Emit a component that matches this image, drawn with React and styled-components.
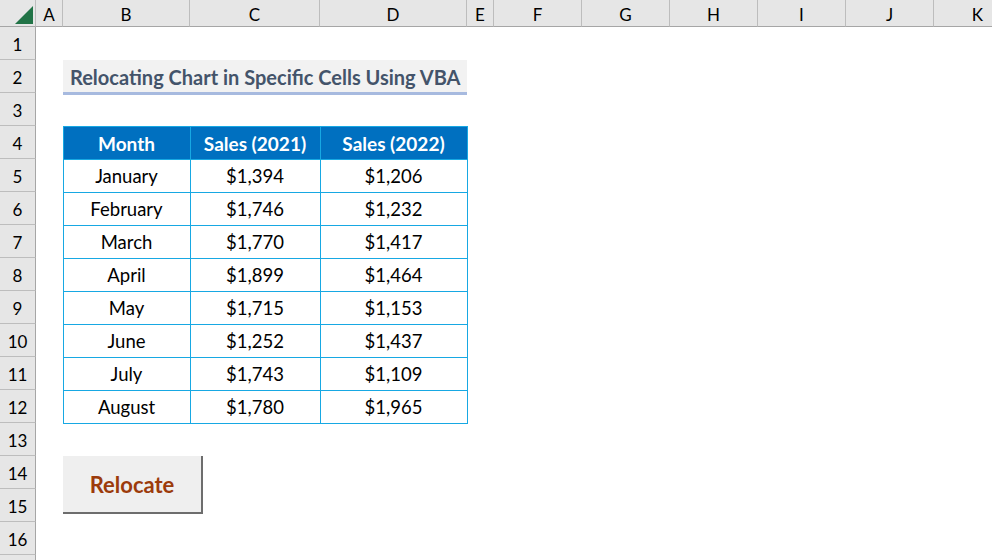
import React from 'react';
import styled, { createGlobalStyle } from 'styled-components';

const columns = [
  { name: 'A', width: 27 },
  { name: 'B', width: 127 },
  { name: 'C', width: 130 },
  { name: 'D', width: 147 },
  { name: 'E', width: 27 },
  { name: 'F', width: 88 },
  { name: 'G', width: 88 },
  { name: 'H', width: 88 },
  { name: 'I', width: 88 },
  { name: 'J', width: 88 },
  { name: 'K', width: 88 },
];

// row 17 only peeks in at the bottom edge, so its number is not drawn
const rows = Array.from({ length: 17 }, (_, i) => i + 1);
const visibleRows = 16;

const sales = [
  ['January', '$1,394', '$1,206'],
  ['February', '$1,746', '$1,232'],
  ['March', '$1,770', '$1,417'],
  ['April', '$1,899', '$1,464'],
  ['May', '$1,715', '$1,153'],
  ['June', '$1,252', '$1,437'],
  ['July', '$1,743', '$1,109'],
  ['August', '$1,780', '$1,965'],
];

const App = () => {
  return (
    <>
      <GlobalStyle />
      <Sheet>
        <Corner>
          <svg width="36" height="27" viewBox="0 0 36 27">
            <polygon points="33,6 33,24 15,24" fill="#217346" />
          </svg>
        </Corner>
        {columns.map((c, i) => (
          <ColHeader key={c.name} $col={i + 2}>{c.name}</ColHeader>
        ))}
        {rows.map((r) => (
          <RowHeader key={r} $row={r + 1}>{r <= visibleRows ? r : ''}</RowHeader>
        ))}

        <Title>Relocating Chart in Specific Cells Using VBA</Title>

        <DataTable>
          <thead>
            <tr>
              <th>Month</th>
              <th>Sales (2021)</th>
              <th>Sales (2022)</th>
            </tr>
          </thead>
          <tbody>
            {sales.map((row) => (
              <tr key={row[0]}>
                {row.map((v, i) => <td key={i}>{v}</td>)}
              </tr>
            ))}
          </tbody>
        </DataTable>

        <RelocateButton>Relocate</RelocateButton>
      </Sheet>
    </>
  );
};

const GlobalStyle = createGlobalStyle`
  html, body {
    margin: 0;
    padding: 0;
    background: #fff;
    overflow: hidden;
    font-family: 'Lato', 'Liberation Sans', sans-serif;
  }
`;

const Sheet = styled.div`
  display: grid;
  grid-template-columns: 36px ${columns.map((c) => `${c.width}px`).join(' ')} 1fr;
  grid-template-rows: 27px repeat(17, 33px);
  width: 992px;
  height: 560px;
  overflow: hidden;
  background: #fff;
`;

const Corner = styled.div`
  grid-column: 1;
  grid-row: 1;
  background: #e6e6e6;
  border-right: 1px solid #bdbdbd;
  border-bottom: 1px solid #a6a6a6;
  box-sizing: border-box;
  svg { display: block; }
`;

const ColHeader = styled.div`
  grid-column: ${({ $col }) => $col};
  grid-row: 1;
  display: flex;
  align-items: center;
  justify-content: center;
  background: #e6e6e6;
  border-right: 1px solid #bdbdbd;
  border-bottom: 1px solid #a6a6a6;
  box-sizing: border-box;
  font-size: 17px;
  color: #000;
  padding-top: 2px;
`;

const RowHeader = styled.div`
  grid-column: 1;
  grid-row: ${({ $row }) => $row};
  display: flex;
  align-items: center;
  justify-content: center;
  background: #e6e6e6;
  border-right: 1px solid #a6a6a6;
  border-bottom: 1px solid #bdbdbd;
  box-sizing: border-box;
  font-size: 17px;
  color: #000;
  padding-top: 2px;
`;

const Title = styled.div`
  grid-column: 3 / 6;
  grid-row: 3;
  display: flex;
  align-items: center;
  padding: 1px 0 0 7px;
  background: #f2f2f2;
  border-bottom: 3px solid #a7badf;
  box-sizing: border-box;
  height: 35px;
  font-size: 20px;
  font-weight: 700;
  color: #44546a;
  white-space: nowrap;
`;

const DataTable = styled.table`
  grid-column: 3 / 6;
  grid-row: 5 / 14;
  border-collapse: collapse;
  width: 405px;
  margin-left: -0.5px;
  table-layout: fixed;
  font-size: 18.5px;

  th, td {
    border: 1px solid #17a8e3;
    height: 33px;
    padding: 0;
    text-align: center;
    box-sizing: border-box;
  }
  th {
    background: #0070c0;
    color: #fff;
    font-weight: 700;
    font-size: 19px;
  }
  td { color: #000; }
  th:nth-child(1) { width: 127px; }
  th:nth-child(2) { width: 130px; }
`;

const RelocateButton = styled.button`
  grid-column: 3 / 5;
  grid-row: 15 / 17;
  justify-self: start;
  align-self: start;
  width: 140px;
  height: 58px;
  margin: 0;
  padding: 1px 0 0;
  background: #efefef;
  border: none;
  border-right: 2px solid #6d6d6d;
  border-bottom: 2px solid #6d6d6d;
  font-family: 'Lato', 'Liberation Sans', sans-serif;
  font-size: 22px;
  font-weight: 700;
  color: #9c3b0b;
`;

export default App;
